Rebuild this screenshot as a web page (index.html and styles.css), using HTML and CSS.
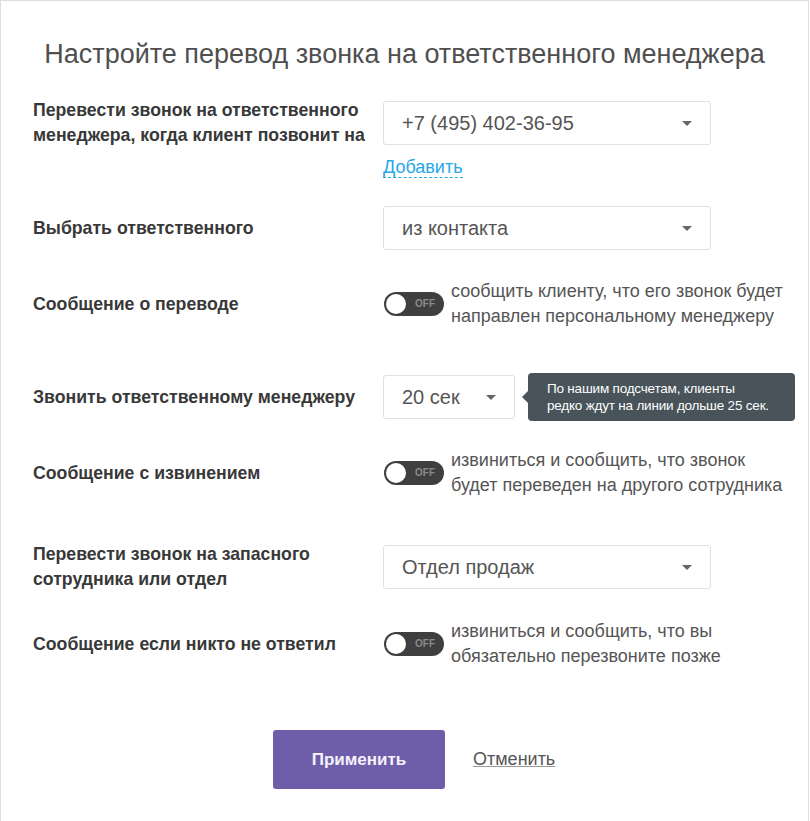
FILE: index.html
```html
<!DOCTYPE html>
<html lang="ru">

<head>
    <meta charset="UTF-8">
    <meta name="viewport" content="width=device-width, initial-scale=1.0">
    <title>Перевод звонка</title>
    <link rel="stylesheet" href="styles.css">
</head>

<body>
    <div class="modal">
        <h1 class="modal-title">Настройте перевод звонка на ответственного менеджера</h1>

        <div class="form-row row-with-link">
            <div class="row-main">
                <label class="field-label">Перевести звонок на ответственного менеджера, когда клиент позвонит на</label>
                <div class="select">+7 (495) 402-36-95<span class="caret"></span></div>
            </div>
            <a href="#" class="add-link">Добавить</a>
        </div>

        <div class="form-row">
            <label class="field-label">Выбрать ответственного</label>
            <div class="select">из контакта<span class="caret"></span></div>
        </div>

        <div class="form-row toggle-row">
            <label class="field-label">Сообщение о переводе</label>
            <div class="toggle-field">
                <span class="toggle"><span class="knob"></span><span class="toggle-text">OFF</span></span>
                <span class="toggle-hint">сообщить клиенту, что его звонок будет направлен персональному менеджеру</span>
            </div>
        </div>

        <div class="form-row">
            <label class="field-label">Звонить ответственному менеджеру</label>
            <div class="select-with-tip">
                <div class="select select-small">20 сек<span class="caret"></span></div>
                <div class="tooltip">По нашим подсчетам, клиенты<br>редко ждут на линии дольше 25 сек.</div>
            </div>
        </div>

        <div class="form-row toggle-row">
            <label class="field-label">Сообщение с извинением</label>
            <div class="toggle-field">
                <span class="toggle"><span class="knob"></span><span class="toggle-text">OFF</span></span>
                <span class="toggle-hint">извиниться и сообщить, что звонок будет переведен на другого сотрудника</span>
            </div>
        </div>

        <div class="form-row">
            <label class="field-label">Перевести звонок на запасного сотрудника или отдел</label>
            <div class="select">Отдел продаж<span class="caret"></span></div>
        </div>

        <div class="form-row toggle-row">
            <label class="field-label">Сообщение если никто не ответил</label>
            <div class="toggle-field">
                <span class="toggle"><span class="knob"></span><span class="toggle-text">OFF</span></span>
                <span class="toggle-hint">извиниться и сообщить, что вы обязательно перезвоните позже</span>
            </div>
        </div>

        <div class="actions">
            <button class="btn-apply">Применить</button>
            <a href="#" class="btn-cancel">Отменить</a>
        </div>
    </div>
</body>

</html>
```

FILE: styles.css
```css
body {
    margin: 0;
    padding: 0;
    background-color: #fff;
    font-family: "Liberation Sans", Arial, sans-serif;
    color: #555;
}

.modal {
    width: 809px;
    min-height: 830px;
    border: 1px solid #dedede;
    box-sizing: border-box;
    padding: 37px 0 0 32px;
}

.modal-title {
    margin: 0 0 28px;
    padding-right: 32px;
    font-size: 27px;
    line-height: 32px;
    font-weight: normal;
    text-align: center;
    color: #4f4f4f;
}

.form-row,
.row-main {
    display: flex;
    align-items: center;
    min-height: 48px;
    margin-bottom: 27px;
}

.row-main {
    margin-bottom: 0;
}

.row-with-link {
    display: block;
    margin-bottom: 26px;
}

.toggle-row {
    margin-bottom: 44px;
}

.toggle-row:nth-last-child(2) {
    margin-bottom: 47px;
}

.field-label {
    width: 350px;
    flex-shrink: 0;
    font-size: 17.7px;
    line-height: 25px;
    font-weight: bold;
    color: #383838;
}

.select {
    position: relative;
    width: 328px;
    height: 44px;
    box-sizing: border-box;
    border: 1px solid #e0e0e0;
    border-radius: 3px;
    padding-left: 18px;
    font-size: 20px;
    line-height: 42px;
    color: #555;
}

.select-small {
    width: 132px;
}

.caret {
    position: absolute;
    right: 18px;
    top: 19px;
    width: 0;
    height: 0;
    border-left: 5px solid transparent;
    border-right: 5px solid transparent;
    border-top: 5px solid #666;
}

.add-link {
    display: inline-block;
    margin: 9px 0 0 350px;
    font-size: 18px;
    line-height: 20px;
    color: #27a7e6;
    text-decoration: none;
    border-bottom: 1px dashed #27a7e6;
}

.toggle-field {
    display: flex;
    align-items: center;
}

.toggle {
    position: relative;
    flex-shrink: 0;
    width: 60px;
    height: 24px;
    margin: 0 7px 0 1px;
    border-radius: 12px;
    background-color: #3f3f3f;
}

.knob {
    position: absolute;
    left: 2px;
    top: 2px;
    width: 20px;
    height: 20px;
    border-radius: 50%;
    background-color: #fff;
}

.toggle-text {
    position: absolute;
    left: 31px;
    top: 7px;
    font-size: 10px;
    line-height: 10px;
    font-weight: bold;
    color: #8a8a8a;
}

.toggle-hint {
    width: 345px;
    font-size: 18px;
    line-height: 25px;
    color: #555;
}

.select-with-tip {
    display: flex;
    align-items: center;
}

.tooltip {
    position: relative;
    width: 267px;
    height: 48px;
    box-sizing: border-box;
    margin-left: 13px;
    padding: 7px 8px 0 19px;
    border-radius: 4px;
    background-color: #485459;
    font-size: 13.5px;
    line-height: 17px;
    letter-spacing: -0.2px;
    color: #fff;
    white-space: nowrap;
}

.tooltip::before {
    content: "";
    position: absolute;
    left: -6px;
    top: 18px;
    border-top: 6px solid transparent;
    border-bottom: 6px solid transparent;
    border-right: 6px solid #485459;
}

.actions {
    display: flex;
    align-items: center;
    margin: 61px 0 0 240px;
}

.btn-apply {
    width: 172px;
    height: 59px;
    border: none;
    border-radius: 3px;
    background-color: #6e5eaa;
    color: #f4f2fa;
    font-family: "Liberation Sans", Arial, sans-serif;
    font-size: 17px;
    font-weight: bold;
}

.btn-cancel {
    margin-left: 28px;
    font-size: 18px;
    color: #555;
    text-decoration: underline;
    text-decoration-color: #999;
}
```
